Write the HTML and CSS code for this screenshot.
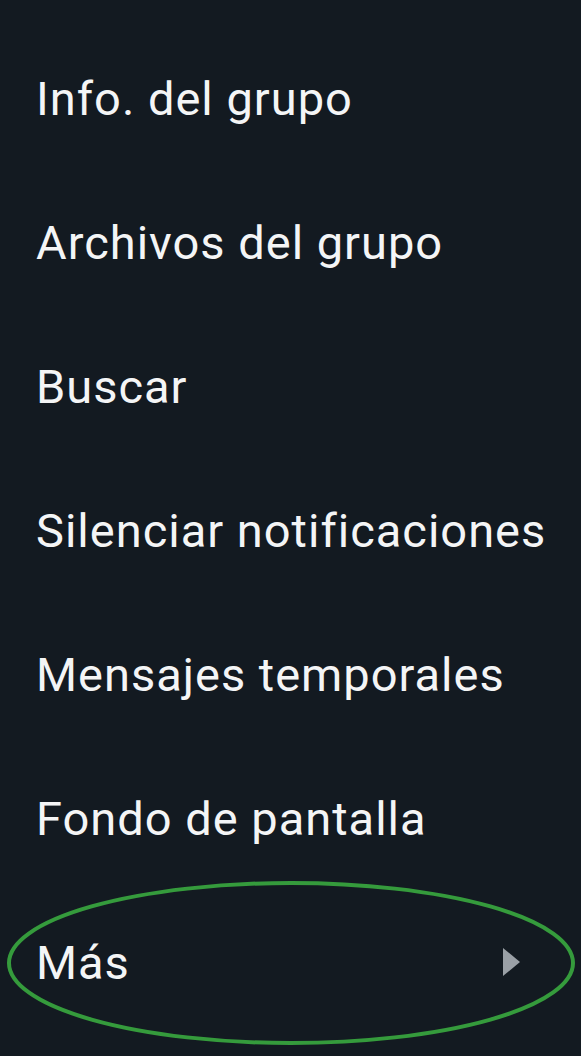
FILE: index.html
```html
<!DOCTYPE html>
<html lang="es">
<head>
<meta charset="utf-8">
<link rel="stylesheet" href="styles.css">
</head>
<body>
<ul class="menu">
  <li class="item"><span class="label">Info. del grupo</span></li>
  <li class="item"><span class="label">Archivos del grupo</span></li>
  <li class="item"><span class="label">Buscar</span></li>
  <li class="item"><span class="label">Silenciar notificaciones</span></li>
  <li class="item"><span class="label">Mensajes temporales</span></li>
  <li class="item"><span class="label">Fondo de pantalla</span></li>
  <li class="item item-more">
    <span class="label">Más</span>
    <svg class="arrow" width="17" height="28" viewBox="0 0 17 28"><polygon points="0,0 17,14 0,28" fill="#9aa0a6"/></svg>
    <svg class="highlight" width="570" height="166" viewBox="0 0 570 166"><ellipse cx="285" cy="83" rx="282" ry="80" fill="none" stroke="#359b3c" stroke-width="4"/></svg>
  </li>
</ul>
</body>
</html>
```
FILE: styles.css
```css
html, body {
  margin: 0;
  padding: 0;
  background: #131a21;
}
body {
  width: 581px;
  height: 1056px;
  overflow: hidden;
  font-family: Roboto, "Noto Sans", sans-serif;
  color: #f4f5f6;
}
.menu {
  list-style: none;
  margin: 0;
  padding: 26px 0 0 0;
}
.item {
  height: 144px;
  display: flex;
  align-items: center;
  padding: 0 61px 0 36px;
  position: relative;
}
.label {
  font-size: 47px;
  letter-spacing: 1px;
  line-height: 1;
  flex: 1;
  white-space: nowrap;
}
.arrow {
  display: block;
}
.highlight {
  position: absolute;
  left: 6px;
  top: -10px;
}
```
